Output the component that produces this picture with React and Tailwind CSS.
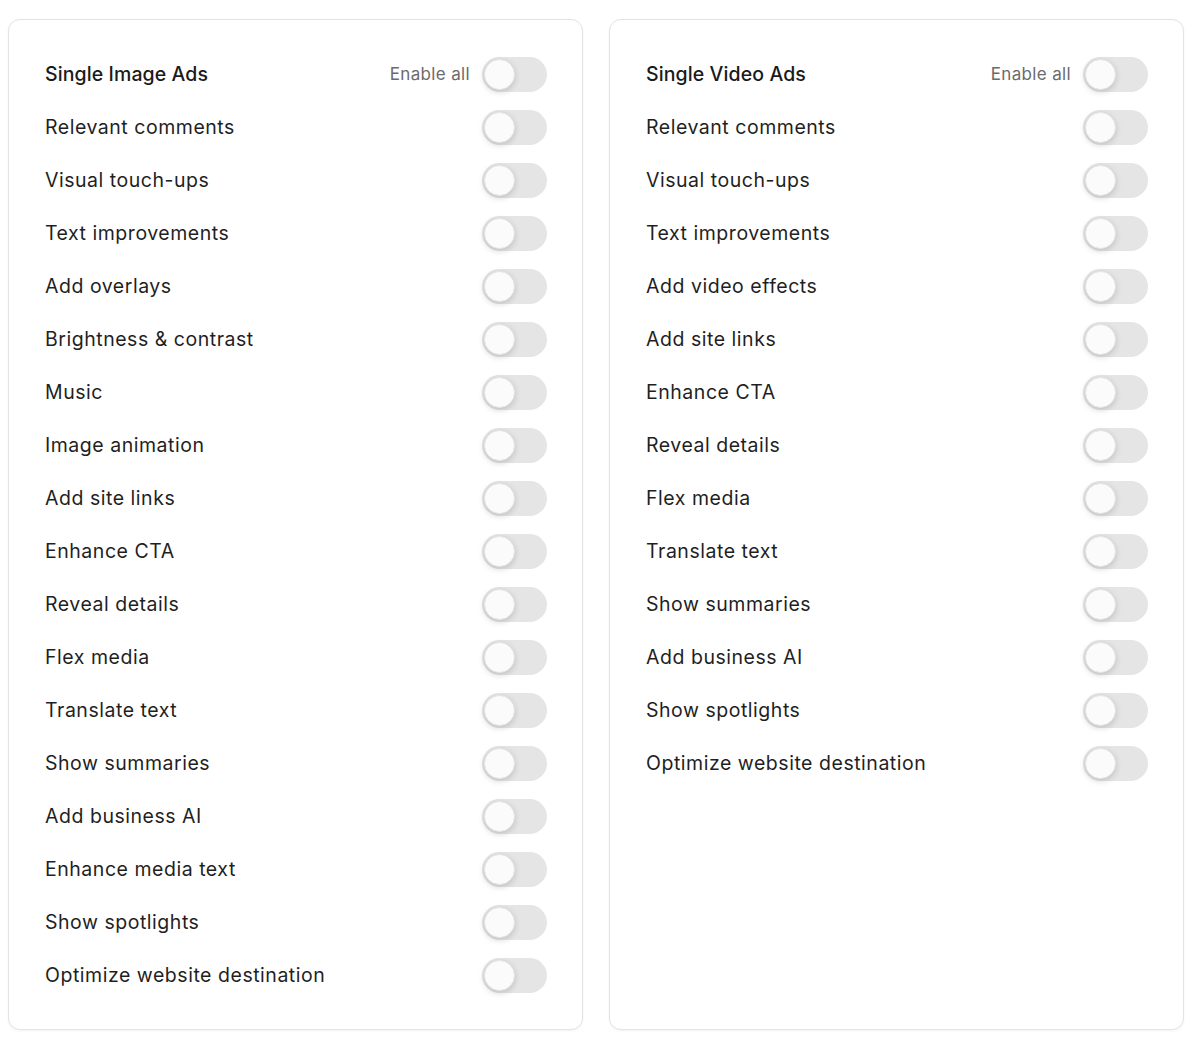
import { useState } from "react";

const imageItems = [
    "Relevant comments",
    "Visual touch-ups",
    "Text improvements",
    "Add overlays",
    "Brightness & contrast",
    "Music",
    "Image animation",
    "Add site links",
    "Enhance CTA",
    "Reveal details",
    "Flex media",
    "Translate text",
    "Show summaries",
    "Add business AI",
    "Enhance media text",
    "Show spotlights",
    "Optimize website destination",
];

const videoItems = [
    "Relevant comments",
    "Visual touch-ups",
    "Text improvements",
    "Add video effects",
    "Add site links",
    "Enhance CTA",
    "Reveal details",
    "Flex media",
    "Translate text",
    "Show summaries",
    "Add business AI",
    "Show spotlights",
    "Optimize website destination",
];

function Toggle({ on, onClick }) {
    return (
        <button
            onClick={onClick}
            className={`relative h-[35px] w-[65px] shrink-0 rounded-full transition-colors ${on ? "bg-[#1a1a1a]" : "bg-[#e5e5e5]"}`}
        >
            <span
                className={`absolute top-[2px] h-[31px] w-[31px] rounded-full border border-[#e4e4e4] bg-[#fbfbfb] shadow-[0_2px_6px_rgba(0,0,0,0.16)] transition-all ${on ? "left-[32px]" : "left-[2px]"}`}
            />
        </button>
    );
}

function Card({ title, items }) {
    const [state, setState] = useState({});
    const allOn = items.every((i) => state[i]);

    const toggleAll = () => {
        const next = {};
        items.forEach((i) => (next[i] = !allOn));
        setState(next);
    };

    return (
        <div className="flex w-[575px] flex-col gap-[18px] rounded-xl border border-[#e3e3e3] bg-white pb-9 pl-9 pr-[35px] pt-[37px] shadow-[0_1px_3px_rgba(0,0,0,0.05)]">
            {/* Header */}
            <div className="flex h-[35px] items-center justify-between">
                <h2 className="text-[19.5px] font-medium tracking-[0.005em] text-[#1a1a1a]">{title}</h2>
                <div className="flex items-center gap-3">
                    <span className="text-[17px] tracking-[0.02em] text-[#6b6b6b]">Enable all</span>
                    <Toggle on={allOn} onClick={toggleAll} />
                </div>
            </div>

            {items.map((item) => (
                <div key={item} className="flex h-[35px] items-center justify-between">
                    <span className="text-[19.5px] tracking-[0.027em] text-[#1f1f1f]">{item}</span>
                    <Toggle on={!!state[item]} onClick={() => setState({ ...state, [item]: !state[item] })} />
                </div>
            ))}
        </div>
    );
}

export default function App() {
    return (
        <div className="min-h-[1041px] bg-white pl-2 pt-[19px] font-['Inter',sans-serif]">
            <div className="flex items-stretch gap-[26px]">
                <Card title="Single Image Ads" items={imageItems} />
                <Card title="Single Video Ads" items={videoItems} />
            </div>
        </div>
    );
}
